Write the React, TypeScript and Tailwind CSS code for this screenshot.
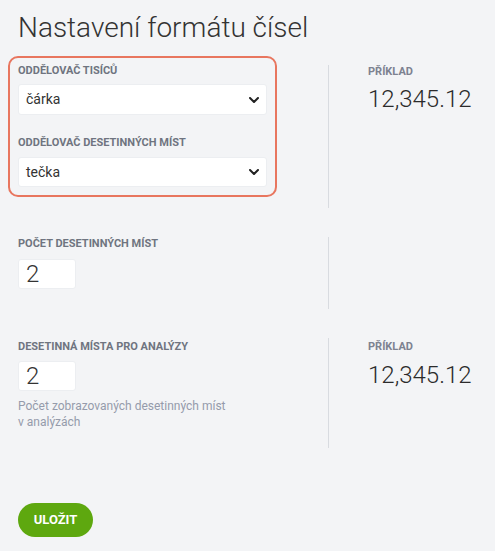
import { useState } from 'react';

const label = 'block text-[11px] leading-[14px] font-bold uppercase text-[#6f7480]';

function Chevron() {
  return (
    <svg width="10" height="6" viewBox="0 0 10 6" fill="none">
      <path d="M1 1 L5 5 L9 1" stroke="#222" strokeWidth="2" strokeLinecap="round" strokeLinejoin="round" />
    </svg>
  );
}

function FakeSelect({ value, h }: { value: string; h: string }) {
  return (
    <div className={`flex w-full items-center justify-between rounded-[3px] border border-[#eceef1] bg-white pl-[7px] pr-[7px] ${h}`}>
      <span className="text-[14px] text-[#333]">{value}</span>
      <Chevron />
    </div>
  );
}

function Example({ pt, gap }: { pt: string; gap: string }) {
  return (
    <div className={`pl-[39px] ${pt}`}>
      <span className={label + ' text-[#7d8290]'}>Příklad</span>
      <div className={`text-[24px] leading-[28px] font-light text-[#2b2b2b] ${gap}`}>12,345.12</div>
    </div>
  );
}

export default function App() {
  const [places, setPlaces] = useState('2');
  const [analysis, setAnalysis] = useState('2');

  return (
    <div className="min-h-screen bg-[#f3f4f6] px-[18px] pt-[12px] font-['Roboto',sans-serif]">
      <h1 className="text-[28px] leading-[32px] font-light text-[#333]">Nastavení formátu čísel</h1>

      {/* oddělovače */}
      <div className="mt-[12px] flex items-start">
        <div className="w-[310px]">
          <div className="-ml-[10px] w-[269px] rounded-[10px] border-2 border-[#e8765f] px-[8px] pt-[6px] pb-[8px]">
            <span className={label}>Oddělovač tisíců</span>
            <div className="mt-[6px]">
              <FakeSelect value="čárka" h="h-[31px]" />
            </div>
            <span className={label + ' mt-[21px]'}>Oddělovač desetinných míst</span>
            <div className="mt-[7px]">
              <FakeSelect value="tečka" h="h-[30px]" />
            </div>
          </div>
        </div>
        <div className="mt-[9px] h-[143px] border-l border-[#d8dbe0]">
          <Example pt="pt-0" gap="mt-[6px]" />
        </div>
      </div>

      {/* počet míst */}
      <div className="mt-[29px] flex">
        <div className="w-[310px]">
          <span className={label}>Počet desetinných míst</span>
          <input
            value={places}
            onChange={(e) => setPlaces(e.target.value)}
            className="mt-[8px] h-[30px] w-[58px] rounded-[3px] border border-[#eceef1] bg-white px-[7px] text-[24px] font-light text-[#333] outline-none"
          />
        </div>
        <div className="h-[72px] border-l border-[#d8dbe0]" />
      </div>

      {/* analýzy */}
      <div className="mt-[29px] flex">
        <div className="w-[310px] pt-[2px]">
          <span className={label}>Desetinná místa pro analýzy</span>
          <input
            value={analysis}
            onChange={(e) => setAnalysis(e.target.value)}
            className="mt-[7px] h-[30px] w-[58px] rounded-[3px] border border-[#eceef1] bg-white px-[7px] text-[24px] font-light text-[#333] outline-none"
          />
          <p className="mt-[7px] w-[212px] text-[12px] leading-[16px] text-[#959bab]">
            Počet zobrazovaných desetinných míst v analýzách
          </p>
        </div>
        <div className="h-[110px] border-l border-[#d8dbe0]">
          <Example pt="pt-[2px]" gap="mt-[7px]" />
        </div>
      </div>

      <button className="mt-[55px] mb-[14px] h-[34px] w-[75px] rounded-full bg-[#5ea80f] text-[13px] font-bold uppercase text-white">
        Uložit
      </button>
    </div>
  );
}
